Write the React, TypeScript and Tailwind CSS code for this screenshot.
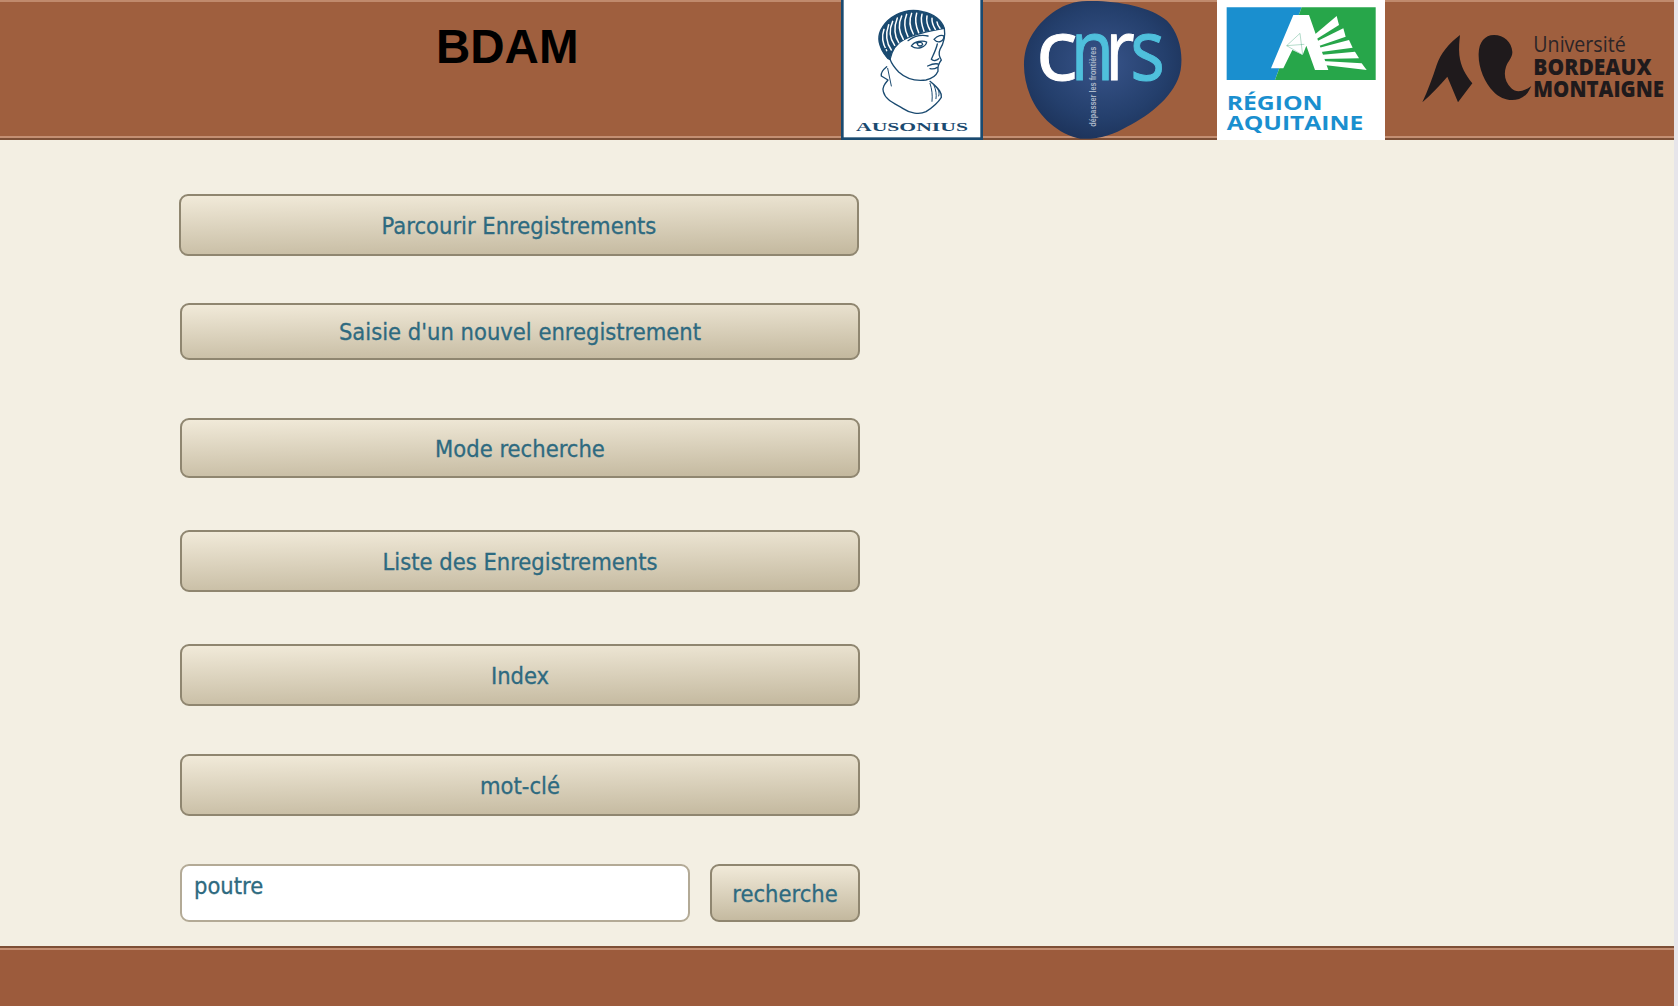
const menu = [
  { label: "Parcourir Enregistrements", cls: "mt-[54px] ml-[179px] h-[62px]" },
  { label: "Saisie d'un nouvel enregistrement", cls: "mt-[47px] ml-[180px] h-[57px]" },
  { label: "Mode recherche", cls: "mt-[58px] ml-[180px] h-[60px]" },
  { label: "Liste des Enregistrements", cls: "mt-[52px] ml-[180px] h-[62px]" },
  { label: "Index", cls: "mt-[52px] ml-[180px] h-[62px]" },
  { label: "mot-clé", cls: "mt-[48px] ml-[180px] h-[62px]" },
];

const btn =
  "rounded-[9px] border-2 border-[#8f8670] bg-[linear-gradient(179deg,#f1ead9,#c3b89e)] text-[23.5px] leading-none text-[#2e6a80] [-webkit-text-stroke:0.3px_#2e6a80] font-['DejaVu_Sans_Condensed','DejaVu_Sans',sans-serif]";

function AusoniusLogo() {
  return (
    <svg viewBox="35 0 426 420" className="h-[140px] w-[142px] shrink-0 bg-white">
      {/* head, drawn in the coordinates of a crop around it */}
      <g transform="translate(120 0)" fill="none" stroke="#1a4a70" strokeWidth="4" strokeLinejoin="round" strokeLinecap="round">
        <path d="M225 85C218 62 195 42 160 35C125 26 85 34 55 62C32 85 24 112 32 135C38 155 48 168 62 178C68 150 80 130 105 118C140 100 185 92 225 85Z" fill="#1a4a70" />
        <path d="M44 88C36 110 40 132 52 152M58 74C48 102 52 130 66 150M70 64C58 90 62 116 76 136M84 54C72 82 76 110 88 128M97 48C86 72 90 98 102 118M112 43C102 68 106 90 116 110M127 40C118 62 122 84 132 102M142 40C136 60 140 80 148 98M158 43C153 60 158 78 164 94M173 48C170 64 175 78 182 90M188 55C187 68 192 78 198 88M203 66C204 74 208 80 212 85" stroke="#fff" strokeWidth="4.5" />
        <path d="M225 85C228 105 226 125 212 148C208 158 208 168 216 180C208 190 204 200 206 214C200 228 190 236 170 240C140 244 110 236 88 216C78 206 68 194 62 178" />
        <path d="M62 178C50 175 44 160 46 148C50 142 58 146 60 152" />
        <path d="M116 122C135 108 158 104 176 108M126 138C135 124 160 120 172 126C170 140 145 152 126 138ZM143 130C150 125 160 126 160 134C155 140 146 140 143 130ZM194 118C205 106 218 104 224 108C224 122 208 134 194 118Z" />
        <path d="M204 132C200 150 190 168 186 178C192 184 202 182 208 176M175 198C188 192 198 190 206 192M182 206C190 208 198 206 204 202" />
        <path d="M52 200C42 208 34 218 36 228L56 240C46 252 38 262 42 275C48 300 75 310 100 325C122 340 150 345 170 335C190 322 208 305 216 292C218 280 212 268 182 244" />
        <path d="M55 205L66 258M182 250C188 268 190 285 188 304M194 256C200 270 202 284 200 296M206 268C210 276 210 284 208 288" strokeWidth="3" />
      </g>
      <text x="248" y="394" textAnchor="middle" textLength="336" lengthAdjust="spacingAndGlyphs" fontFamily="'Liberation Serif', serif" fontWeight="700" fontSize="38" fill="#1a4a70">
        AUSONIUS
      </text>
      <rect x="39" y="-6" width="418" height="422" fill="none" stroke="#1a4a70" strokeWidth="8" />
    </svg>
  );
}

function CnrsLogo() {
  return (
    <svg viewBox="580 0 483 420" className="ml-[39px] h-[140px] w-[161px] shrink-0">
      <defs>
        <radialGradient id="cnrs-blob" cx="50%" cy="45%" r="62%">
          <stop offset="0%" stopColor="#38548a" />
          <stop offset="65%" stopColor="#243f6c" />
          <stop offset="100%" stopColor="#1b3056" />
        </radialGradient>
      </defs>
      <path d="M760 4C840 -2 960 15 1015 62C1052 100 1064 160 1056 210C1042 285 965 345 895 380C855 404 805 420 755 416C690 404 630 350 605 288C580 225 578 160 608 108C640 55 695 10 760 4Z" fill="url(#cnrs-blob)" />
      <g fontFamily="'Open Sans', sans-serif" fontSize="255" strokeWidth="3">
        <text x="622" y="240" textLength="125" lengthAdjust="spacingAndGlyphs" fill="#fff" stroke="#fff">c</text>
        <text x="726" y="240" textLength="130" lengthAdjust="spacingAndGlyphs" fill="#4fc0dc" stroke="#4fc0dc">n</text>
        <text x="830" y="240" textLength="88" lengthAdjust="spacingAndGlyphs" fill="#fff" stroke="#fff">r</text>
        <text x="905" y="240" textLength="104" lengthAdjust="spacingAndGlyphs" fill="#4fc0dc" stroke="#4fc0dc">s</text>
      </g>
      <text transform="translate(803 380) rotate(-90)" textLength="240" lengthAdjust="spacingAndGlyphs" fontFamily="'Liberation Sans', sans-serif" fontWeight="700" fontSize="26" fill="#aab6c8">
        dépasser les frontières
      </text>
    </svg>
  );
}

function AquitaineLogo() {
  return (
    <svg viewBox="51 0 504 420" className="ml-[34px] h-[140px] w-[168px] shrink-0 bg-white">
      <path d="M80 22H305L225 240H80Z" fill="#1a8fcf" />
      <path d="M305 22H527V240H225Z" fill="#27a64a" />
      {/* the A and its wing, in the coordinates of a crop around it */}
      <g transform="translate(195 15)">
        <path d="M85 30H132L190 195H150L124 122L113 150L82 135L55 190H18Z" fill="#fff" />
        <path d="M65 122L105 85L113 150Z" fill="#fff" stroke="#2a9a6a" strokeWidth="1.5" strokeOpacity="0.7" />
        <path d="M65 122L118 118" stroke="#2a9a6a" strokeWidth="1.5" strokeOpacity="0.7" />
        <g fill="#fff">
          <path d="M145 92L215 33L222 60L150 105Z" />
          <path d="M150 112L235 70L242 95L155 125Z" />
          <path d="M158 130L252 105L263 128L162 142Z" />
          <path d="M165 150L270 140L282 160L170 162Z" />
          <path d="M172 168L290 175L305 195L178 180Z" />
        </g>
      </g>
      <text x="80" y="331" textLength="288" lengthAdjust="spacingAndGlyphs" fontFamily="'Open Sans', sans-serif" fontWeight="700" fontSize="58" fill="#1a8fcf">
        RÉGION
      </text>
      <text x="80" y="391" textLength="410" lengthAdjust="spacingAndGlyphs" fontFamily="'Open Sans', sans-serif" fontWeight="700" fontSize="58" fill="#1a8fcf">
        AQUITAINE
      </text>
    </svg>
  );
}

function BordeauxLogo() {
  return (
    <svg viewBox="660 90 750 230" className="ml-[34px] mt-[30px] h-[76.67px] w-[250px] shrink-0">
      <g transform="translate(645 75)" fill="#1f1a1c">
        <path d="M138 30C105 55 80 85 68 120C55 160 42 195 25 232C52 208 78 180 100 155L132 232L175 175C155 150 140 125 136 90C134 68 136 48 138 30Z" />
        <path d="M240 30C212 30 195 52 194 85C192 125 210 172 240 202C264 226 305 236 335 210C343 202 348 192 352 183C332 198 308 206 292 190C274 172 268 150 276 125C282 108 296 98 295 80C293 52 270 30 240 30Z" />
      </g>
      <text x="1003" y="155" textLength="277" lengthAdjust="spacingAndGlyphs" fontFamily="'Open Sans', sans-serif" fontSize="64" fill="#2c2527">
        Université
      </text>
      <text x="1003" y="225" textLength="355" lengthAdjust="spacingAndGlyphs" fontFamily="'Open Sans', sans-serif" fontWeight="800" fontSize="66" fill="#1f1a1c">
        BORDEAUX
      </text>
      <text x="1003" y="292" textLength="392" lengthAdjust="spacingAndGlyphs" fontFamily="'Open Sans', sans-serif" fontWeight="800" fontSize="66" fill="#1f1a1c">
        MONTAIGNE
      </text>
    </svg>
  );
}

export default function App() {
  return (
    <div className="h-[1006px] w-full overflow-hidden bg-[#e6e5ea]">
      <div className="flex h-full w-[1674px] flex-col bg-[#f3efe3]">
        {/* Header */}
        <header className="flex h-[140px] shrink-0 items-start border-t-2 border-b-2 border-t-[#c08a6c] border-b-[#7d4f36] bg-[#9f5f3e] shadow-[inset_0_-2px_0_#c48f73]">
          <div className="-mt-[2px] flex h-[140px] w-full items-start">
            <div className="w-[841px] shrink-0 pl-[436px] pt-[20px]">
              <h1 className="font-['Liberation_Sans',sans-serif] text-[47.5px] leading-[54px] font-bold text-black">BDAM</h1>
            </div>
            <AusoniusLogo />
            <CnrsLogo />
            <AquitaineLogo />
            <BordeauxLogo />
          </div>
        </header>

        {/* Menu */}
        <main className="flex flex-1 flex-col">
          {menu.map((m) => (
            <button key={m.label} className={`${m.cls} ${btn} w-[680px] shrink-0 pt-[3px]`}>
              {m.label}
            </button>
          ))}
          <div className="mt-[48px] ml-[180px] flex h-[58px] w-[680px] gap-[20px]">
            <input
              defaultValue="poutre"
              className="h-full w-[510px] rounded-[9px] border-2 border-[#b3aa96] bg-white px-[12px] pb-[14px] font-['DejaVu_Sans_Condensed','DejaVu_Sans',sans-serif] text-[23.5px] text-[#2e6a80] [-webkit-text-stroke:0.3px_#2e6a80] outline-none"
            />
            <button className={`${btn} h-full w-[150px] pt-[3px]`}>recherche</button>
          </div>
        </main>

        {/* Footer */}
        <footer className="h-[60px] shrink-0 border-t-2 border-t-[#7d4f36] bg-[#9c5b3c] shadow-[inset_0_2px_0_#c48f73]" />
      </div>
    </div>
  );
}
